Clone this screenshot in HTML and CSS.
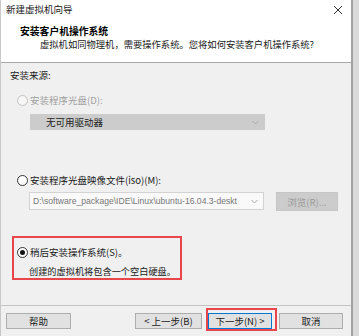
FILE: index.html
```html
<!DOCTYPE html>
<html lang="zh-CN">
<head>
<meta charset="utf-8">
<title>新建虚拟机向导</title>
<link rel="stylesheet" href="styles.css">
</head>
<body>
<div class="window">
  <div class="titlebar">
    <span class="title-text">新建虚拟机向导</span>
    <svg class="close" width="10" height="10" viewBox="0 0 10 10"><path d="M1 1 L9 9 M9 1 L1 9" stroke="#333" stroke-width="1" fill="none"/></svg>
  </div>
  <div class="header">
    <div class="header-title">安装客户机操作系统</div>
    <div class="header-sub">虚拟机如同物理机，需要操作系统。您将如何安装客户机操作系统?</div>
  </div>
  <div class="content">
    <div class="section-label">安装来源:</div>
    <div class="option option-disc">
      <span class="radio radio-disabled"></span>
      <span class="opt-label disabled">安装程序光盘(D):</span>
    </div>
    <div class="select">
      <span class="select-text">无可用驱动器</span>
      <svg class="chev" width="7" height="5" viewBox="0 0 7 5"><path d="M0.5 1 L3.5 4 L6.5 1" stroke="#a8a8a8" stroke-width="1" fill="none"/></svg>
    </div>
    <div class="option option-iso">
      <span class="radio"></span>
      <span class="opt-label">安装程序光盘映像文件(iso)(M):</span>
    </div>
    <div class="iso-row">
      <div class="combo">
        <span class="combo-text">D:\software_package\IDE\Linux\ubuntu-16.04.3-deskt</span>
        <svg class="chev" width="7" height="5" viewBox="0 0 7 5"><path d="M0.5 1 L3.5 4 L6.5 1" stroke="#a8a8a8" stroke-width="1" fill="none"/></svg>
      </div>
      <div class="browse">浏览(R)...</div>
    </div>
    <div class="later-box">
      <div class="option option-later">
        <span class="radio radio-checked"></span>
        <span class="opt-label">稍后安装操作系统(S)。</span>
      </div>
      <div class="later-desc">创建的虚拟机将包含一个空白硬盘。</div>
    </div>
  </div>
  <div class="footer">
    <div class="btn btn-help">帮助</div>
    <div class="btn btn-back">&lt; 上一步(B)</div>
    <div class="btn btn-next">下一步(N) &gt;</div>
    <div class="btn btn-cancel">取消</div>
  </div>
</div>
</body>
</html>
```
FILE: styles.css
```css
html, body {
  margin: 0;
  padding: 0;
}
body {
  width: 359px;
  height: 336px;
  background: #dadada;
  font-family: "Noto Sans CJK SC", "Noto Sans", sans-serif;
  font-size: 9.5px;
  color: #1a1a1a;
  overflow: hidden;
}
.window {
  width: 353px;
  height: 336px;
  box-sizing: border-box;
  border-left: 1px solid #c9c9c9;
  border-right: 2px solid #a3a3a3;
  background: #f0f0f0;
  display: flex;
  flex-direction: column;
}
.titlebar {
  height: 22px;
  background: #fff;
  display: flex;
  align-items: center;
  padding-left: 5px;
  padding-right: 8px;
  box-sizing: border-box;
}
.title-text {
  flex: 1;
  line-height: 13px;
  margin-top: -4px;
}
.close {
  display: block;
  margin-top: -2px;
}
.header {
  height: 41px;
  background: #fff;
  border-bottom: 1px solid #a8a8a8;
  padding-top: 3px;
  padding-left: 19px;
  box-sizing: border-box;
}
.header-title {
  font-weight: bold;
  font-size: 9.8px;
  line-height: 13px;
  color: #000;
  white-space: nowrap;
}
.header-sub {
  line-height: 13px;
  margin-left: 20px;
  color: #1a1a1a;
  white-space: nowrap;
  font-size: 9.3px;
}
.content {
  flex: 1;
  padding-left: 9px;
  padding-top: 6px;
  box-sizing: border-box;
  display: flex;
  flex-direction: column;
  align-items: flex-start;
}
.section-label {
  line-height: 13px;
}
.option {
  display: flex;
  align-items: center;
  height: 13px;
  margin-left: 7px;
  white-space: nowrap;
}
.option-disc {
  margin-top: 12px;
}
.option-iso {
  margin-top: 44px;
}
.radio {
  width: 11px;
  height: 11px;
  box-sizing: border-box;
  border: 1px solid #333;
  border-radius: 50%;
  background: #fff;
  display: flex;
  align-items: center;
  justify-content: center;
  flex: none;
}
.radio-disabled {
  border-color: #c2c2c2;
  background: #f7f7f7;
}
.radio-checked::after {
  content: "";
  width: 5px;
  height: 5px;
  border-radius: 50%;
  background: #111;
}
.opt-label {
  margin-left: 2px;
  line-height: 13px;
}
.disabled {
  color: #a0a0a0;
}
.select {
  margin-top: 7px;
  margin-left: 20px;
  width: 235px;
  height: 16px;
  background: #cccccc;
  display: flex;
  align-items: center;
  padding-left: 16px;
  padding-right: 6px;
  box-sizing: border-box;
}
.select-text {
  flex: 1;
  color: #1a1a1a;
}
.chev {
  display: block;
  flex: none;
}
.iso-row {
  display: flex;
  align-items: flex-start;
  margin-top: 5px;
}
.combo {
  margin-left: 19px;
  width: 235px;
  height: 18px;
  box-sizing: border-box;
  border: 1px solid #d3d3d3;
  background: #f9f9f9;
  display: flex;
  align-items: center;
  padding-left: 3px;
  padding-right: 5px;
}
.combo-text {
  flex: 1;
  color: #777;
  white-space: nowrap;
  overflow: hidden;
  margin-right: 3px;
  font-family: "Liberation Sans", "Noto Sans", sans-serif;
  font-size: 8.6px;
}
.browse {
  margin-left: 12px;
  width: 62px;
  height: 19px;
  box-sizing: border-box;
  border: 1px solid #c6c6c6;
  background: #cccccc;
  color: #9b9b9b;
  display: flex;
  align-items: center;
  justify-content: center;
  white-space: nowrap;
}
.later-box {
  margin-top: 25px;
  margin-left: 2px;
  width: 170px;
  height: 44px;
  box-sizing: border-box;
  border: 2px solid #e8464a;
  padding-top: 8px;
}
.option-later {
  margin-left: 3px;
}
.later-desc {
  margin-top: 6px;
  margin-left: 15px;
  line-height: 13px;
  white-space: nowrap;
  font-size: 9.2px;
}
.footer {
  height: 31px;
  box-sizing: border-box;
  border-top: 1px solid #c4c4c4;
  padding-top: 7px;
  padding-left: 5px;
  display: flex;
  align-items: flex-start;
}
.btn {
  height: 16px;
  box-sizing: border-box;
  border: 1px solid #adadad;
  background: #e1e1e1;
  display: flex;
  align-items: center;
  justify-content: center;
  color: #1a1a1a;
  position: relative;
  white-space: nowrap;
}
.btn-help {
  width: 65px;
}
.btn-back {
  width: 67px;
  margin-left: 64px;
}
.btn-next {
  width: 64px;
  margin-left: 6px;
  border-color: #0078d7;
}
.btn-next::after {
  content: "";
  position: absolute;
  left: -3px;
  top: -6px;
  right: -6px;
  bottom: -3px;
  border: 2px solid #e8464a;
}
.btn-cancel {
  width: 64px;
  margin-left: 7px;
}
```
